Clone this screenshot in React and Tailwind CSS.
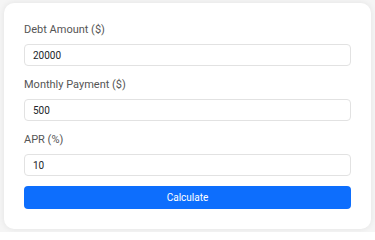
export default function App() {
  const fields = [
    { label: "Debt Amount ($)", value: "20000" },
    { label: "Monthly Payment ($)", value: "500" },
    { label: "APR (%)", value: "10" },
  ];

  return (
    <div
      className="min-h-[232px] w-[375px] bg-[#f5f5f5] px-[4px] pt-[3px] pb-[3px]"
      style={{ fontFamily: "Roboto, 'Liberation Sans', sans-serif" }}
    >
      <div className="rounded-[10px] bg-white px-[20px] pt-[20px] pb-[20px] shadow-[0_0_6px_rgba(0,0,0,0.08)]">
        <div className="flex flex-col gap-[12px]">
          {fields.map((f) => (
            <div key={f.label}>
              <label className="mb-[7px] block text-[11px] leading-[14px] text-[#555]">
                {f.label}
              </label>
              <input
                type="text"
                defaultValue={f.value}
                className="block h-[22px] w-full rounded-[4px] border border-[#e2e2e2] bg-white px-[8px] text-[10px] text-[#212529] outline-none"
              />
            </div>
          ))}
        </div>
        <button className="mt-[10px] block h-[23px] w-full rounded-[4px] bg-[#0d6efd] text-[10px] text-white">
          Calculate
        </button>
      </div>
    </div>
  );
}
